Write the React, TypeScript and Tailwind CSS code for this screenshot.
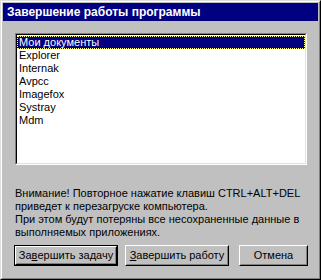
import React from 'react';

const items = ['Мои документы', 'Explorer', 'Internak', 'Avpcc', 'Imagefox', 'Systray', 'Mdm'];

const Button: React.FC<{ children: React.ReactNode; isDefault?: boolean; className?: string }> = ({
    children,
    isDefault,
    className = '',
}) => {
    const body = (
        <div className="h-full border border-t-white border-l-white border-r-black border-b-black">
            <div className="h-full flex items-center justify-center border border-transparent border-r-[#808080] border-b-[#808080] text-[11px] text-black">
                {children}
            </div>
        </div>
    );
    if (isDefault) {
        return <div className={`h-[21px] border border-black ${className}`}>{body}</div>;
    }
    return <div className={`h-[21px] ${className}`}>{body}</div>;
};

export default function App() {
    return (
        <div
            className="w-[321px] h-[280px] border border-t-[#dfdfdf] border-l-[#dfdfdf] border-r-black border-b-black"
            style={{ fontFamily: '"Liberation Sans", Arial, sans-serif' }}
        >
            <div className="h-full flex flex-col bg-[#c0c0c0] border border-t-white border-l-white border-r-[#808080] border-b-[#808080] p-px">
                <div className="h-[18px] bg-[#000080] flex items-center px-[4px]">
                    <span className="text-white font-bold text-[12px] leading-none">Завершение работы программы</span>
                </div>

                <div className="ml-[12px] mr-[11px] mt-[12px] h-[132px] border border-t-[#808080] border-l-[#808080] border-r-white border-b-white">
                    <div className="h-full bg-white border border-t-black border-l-black border-r-[#dfdfdf] border-b-[#dfdfdf] pt-px">
                        {items.map((item, i) => (
                            <div
                                key={item}
                                className={`h-[13px] leading-[13px] text-[11px] pl-[2px] ${
                                    i === 0
                                        ? 'bg-[#000080] text-white outline outline-1 outline-dotted outline-[#ffff80] -outline-offset-1'
                                        : 'text-black'
                                }`}
                            >
                                {item}
                            </div>
                        ))}
                    </div>
                </div>

                <div className="ml-[12px] mt-[22px] text-[11px] leading-[13px] text-black">
                    <p>Внимание! Повторное нажатие клавиш CTRL+ALT+DEL</p>
                    <p>приведет к перезагруске компьютера.</p>
                    <p>При этом будут потеряны все несохраненные данные в</p>
                    <p>выполняемых приложениях.</p>
                </div>

                <div className="flex ml-[11px] mt-[6px]">
                    <Button isDefault className="w-[104px]">
                        За<u>в</u>ершить задачу
                    </Button>
                    <Button className="w-[104px] ml-[7px]">
                        <u>З</u>авершить работу
                    </Button>
                    <Button className="w-[69px] ml-[10px]">Отмена</Button>
                </div>
            </div>
        </div>
    );
}
